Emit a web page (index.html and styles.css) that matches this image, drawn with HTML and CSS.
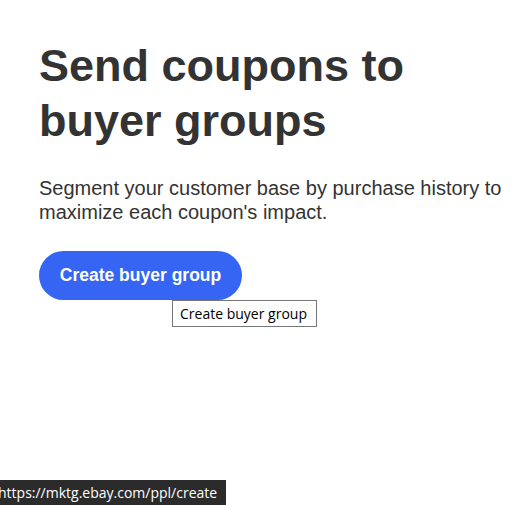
FILE: index.html
```html
<!DOCTYPE html>
<html lang="en">
<head>
<meta charset="utf-8">
<title>Send coupons to buyer groups</title>
<link rel="stylesheet" href="styles.css">
</head>
<body>
<main class="page">
  <h1 class="title">Send coupons to buyer groups</h1>
  <p class="lead">Segment your customer base by purchase history to maximize each coupon's impact.</p>
  <div class="action">
    <a class="btn" href="#">Create buyer group</a>
    <div class="hint">Create buyer group</div>
  </div>
</main>
<div class="status">https://mktg.ebay.com/ppl/create</div>
</body>
</html>
```

FILE: styles.css
```css
html, body {
  margin: 0;
  padding: 0;
  background: #ffffff;
}
body {
  font-family: "Liberation Sans", Arial, sans-serif;
  color: #333333;
}
.page {
  padding: 38px 0 0 39px;
  width: 470px;
}
.title {
  margin: 0;
  font-size: 45px;
  font-weight: 700;
  line-height: 55px;
  color: #333333;
  width: 400px;
}
.lead {
  margin: 28px 0 0 0;
  font-size: 20px;
  line-height: 24px;
  color: #333333;
}
.action {
  position: relative;
  margin-top: 27px;
  height: 80px;
}
.btn {
  display: flex;
  align-items: center;
  justify-content: center;
  box-sizing: border-box;
  width: 203px;
  height: 49px;
  border-radius: 25px;
  background: #3665f3;
  color: #ffffff;
  font-size: 17.5px;
  font-weight: 700;
  text-decoration: none;
}
.hint {
  position: absolute;
  left: 133px;
  top: 49px;
  z-index: 5;
  box-sizing: border-box;
  height: 27px;
  width: 145px;
  padding: 0 7px;
  border: 1px solid #767676;
  background: #ffffff;
  color: #000000;
  font-family: "Open Sans", "Noto Sans", sans-serif;
  font-size: 14px;
  line-height: 25px;
  white-space: nowrap;
}
.status {
  position: fixed;
  left: -8px;
  bottom: 0;
  height: 25px;
  padding: 0 6px 0 6px;
  width: 234px;
  box-sizing: border-box;
  background: #2b2b2b;
  color: #ffffff;
  font-family: "Open Sans", "Noto Sans", sans-serif;
  font-size: 14px;
  line-height: 25px;
  white-space: nowrap;
  overflow: hidden;
}
```
